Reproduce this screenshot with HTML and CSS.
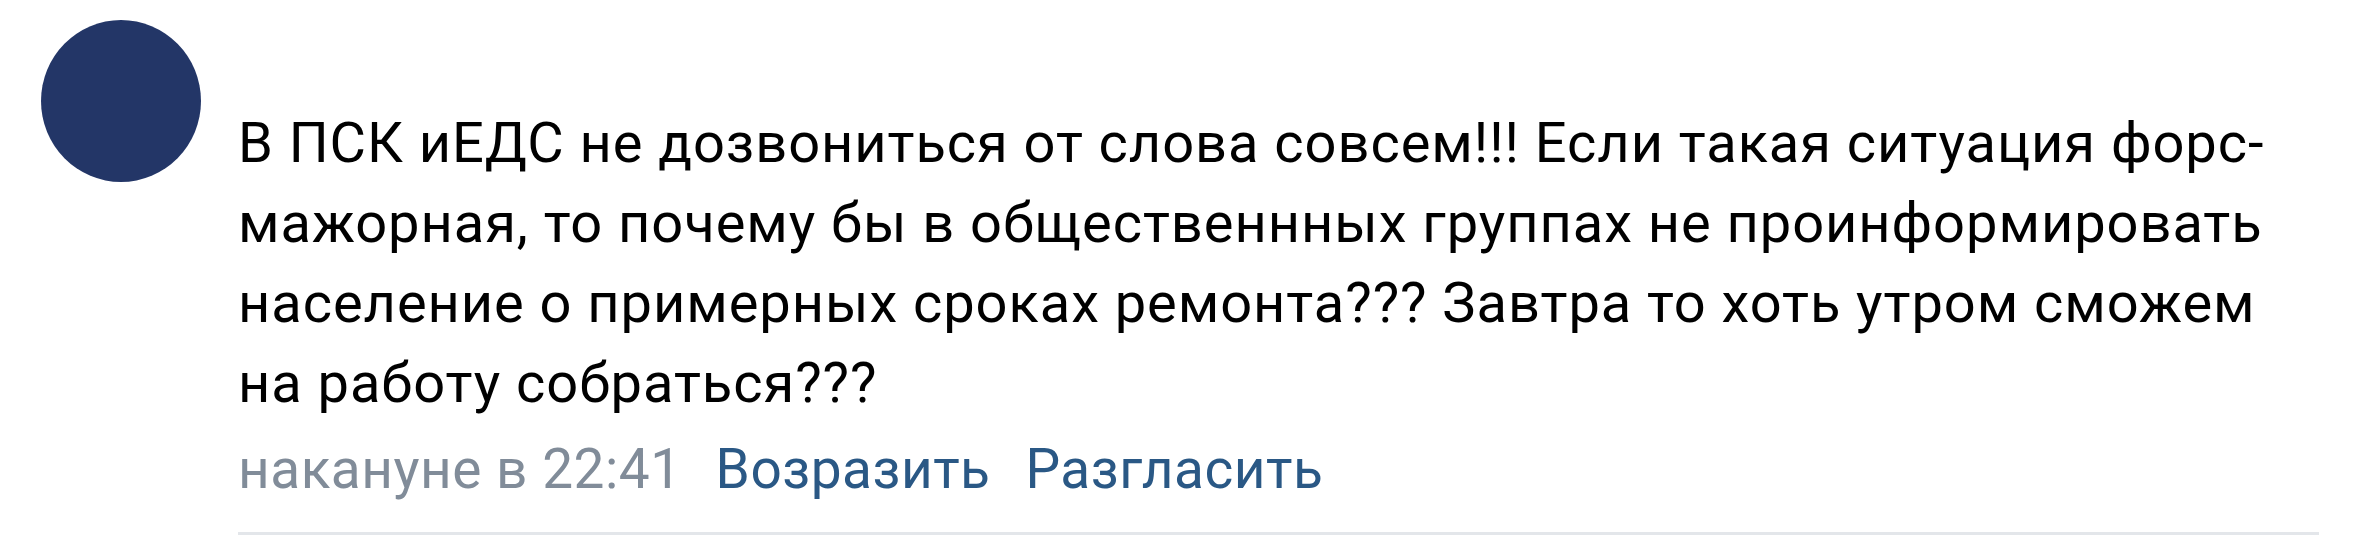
FILE: index.html
```html
<!DOCTYPE html>
<html lang="ru">
<head>
<meta charset="utf-8">
<title>Комментарий</title>
<link rel="stylesheet" href="styles.css">
</head>
<body>
<div class="comment">
  <div class="avatar"></div>
  <div class="content">
    <div class="text">В ПСК иЕДС не дозвониться от слова совсем!!! Если такая ситуация форс-мажорная, то почему бы в общественнных группах не проинформировать население о примерных сроках ремонта??? Завтра то хоть утром сможем на работу собраться???</div>
    <div class="footer">
      <span class="time">накануне в 22:41</span>
      <a class="action" href="#">Возразить</a>
      <a class="action" href="#">Разгласить</a>
    </div>
  </div>
</div>
</body>
</html>
```
FILE: styles.css
```css
html, body {
  margin: 0;
  padding: 0;
  background: #ffffff;
}
body {
  font-family: Roboto, "Liberation Sans", Arial, sans-serif;
}
.comment {
  display: flex;
  align-items: flex-start;
  padding: 20px 0 0 41px;
  gap: 37px;
}
.avatar {
  flex: none;
  width: 160px;
  height: 162px;
  border-radius: 50%;
  background: #233667;
}
.content {
  width: 2081px;
  padding-top: 83px;
  padding-bottom: 23px;
  border-bottom: 3px solid #e3e6ea;
}
.text {
  font-size: 56px;
  line-height: 80px;
  letter-spacing: 0.95px;
  color: #000000;
}
.footer {
  margin-top: 6px;
  display: flex;
  align-items: baseline;
  font-size: 55px;
  line-height: 80px;
  letter-spacing: 0.5px;
}
.time {
  color: #818c99;
  margin-right: 34px;
}
.action {
  color: #2a5885;
  text-decoration: none;
  margin-right: 35px;
}
```
